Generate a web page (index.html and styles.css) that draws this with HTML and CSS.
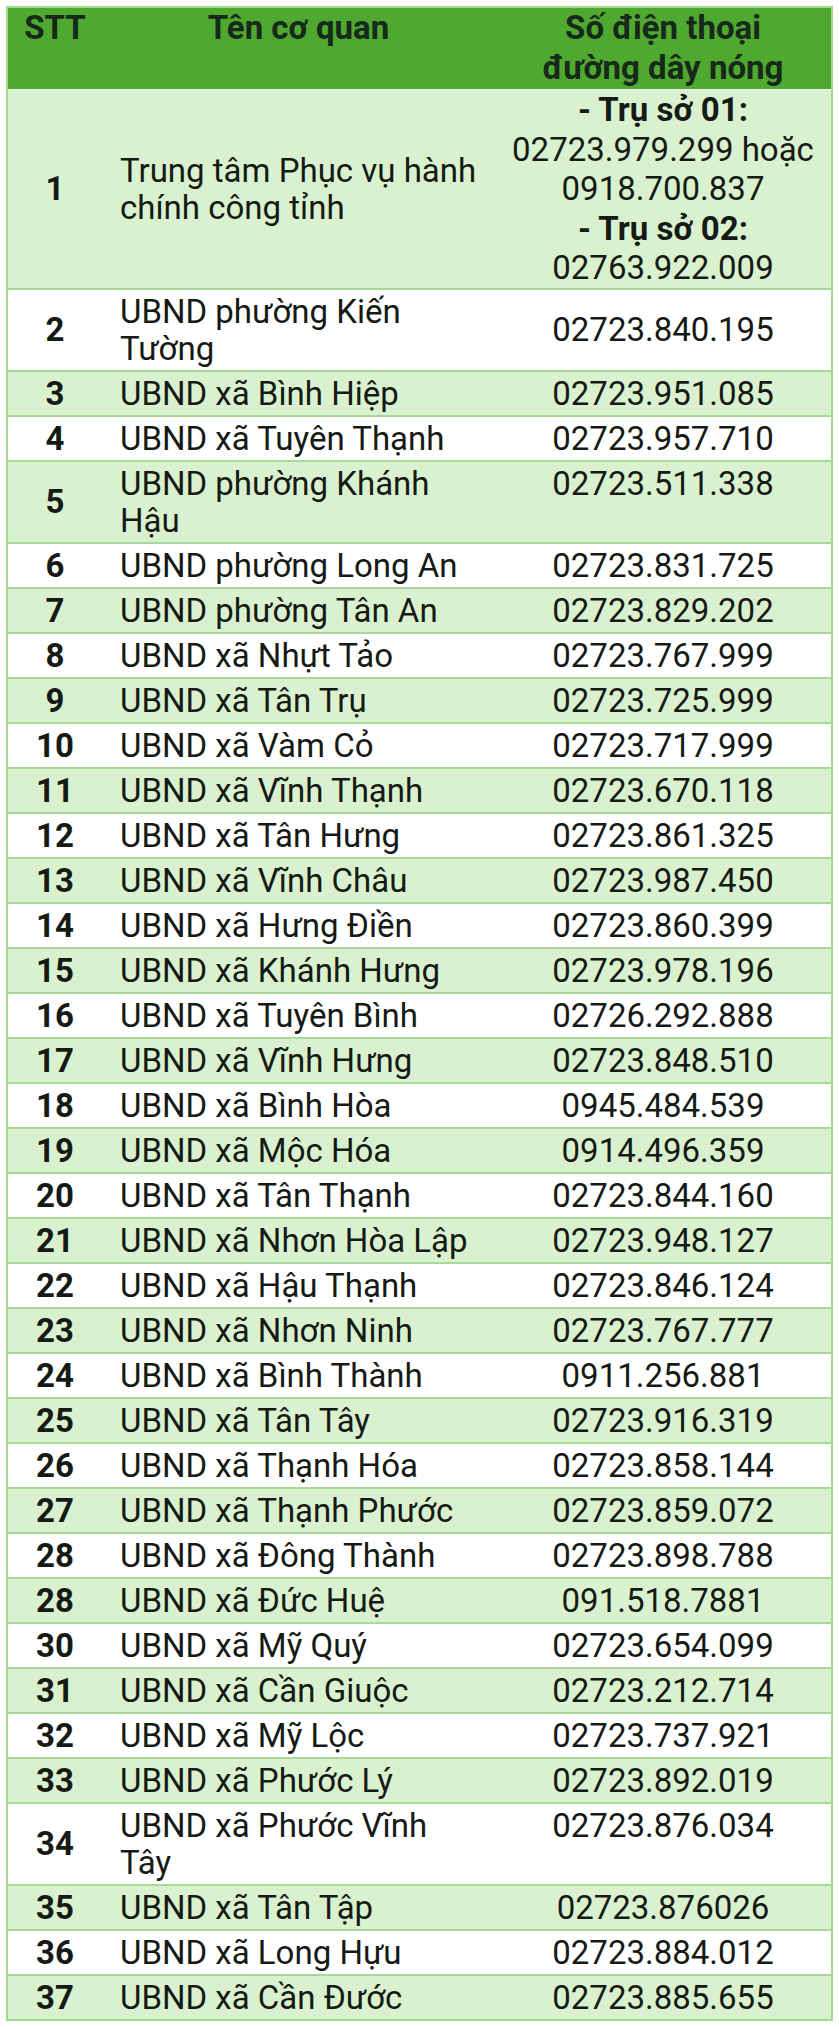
FILE: index.html
```html
<!DOCTYPE html>
<html lang="vi">
<head>
<meta charset="utf-8">
<title>Số điện thoại đường dây nóng</title>
<link rel="stylesheet" href="styles.css">
</head>
<body>
<table class="hotline">
  <colgroup>
    <col class="c-stt">
    <col class="c-name">
    <col class="c-phone">
  </colgroup>
  <thead>
    <tr>
      <th class="stt">STT</th>
      <th class="name">Tên cơ quan</th>
      <th class="phone">Số điện thoại<br>đường dây nóng</th>
    </tr>
  </thead>
  <tbody>
    <tr>
      <td class="stt">1</td>
      <td class="name">Trung tâm Phục vụ hành chính công tỉnh</td>
      <td class="phone multi">
        <div class="lbl">- Trụ sở 01:</div>
        <div>02723.979.299 hoặc</div>
        <div>0918.700.837</div>
        <div class="lbl">- Trụ sở 02:</div>
        <div>02763.922.009</div>
      </td>
    </tr>
    <tr><td class="stt">2</td><td class="name">UBND phường Kiến Tường</td><td class="phone">02723.840.195</td></tr>
    <tr><td class="stt">3</td><td class="name">UBND xã Bình Hiệp</td><td class="phone">02723.951.085</td></tr>
    <tr><td class="stt">4</td><td class="name">UBND xã Tuyên Thạnh</td><td class="phone">02723.957.710</td></tr>
    <tr><td class="stt">5</td><td class="name">UBND phường Khánh Hậu</td><td class="phone top">02723.511.338</td></tr>
    <tr><td class="stt">6</td><td class="name">UBND phường Long An</td><td class="phone">02723.831.725</td></tr>
    <tr><td class="stt">7</td><td class="name">UBND phường Tân An</td><td class="phone">02723.829.202</td></tr>
    <tr><td class="stt">8</td><td class="name">UBND xã Nhựt Tảo</td><td class="phone">02723.767.999</td></tr>
    <tr><td class="stt">9</td><td class="name">UBND xã Tân Trụ</td><td class="phone">02723.725.999</td></tr>
    <tr><td class="stt">10</td><td class="name">UBND xã Vàm Cỏ</td><td class="phone">02723.717.999</td></tr>
    <tr><td class="stt">11</td><td class="name">UBND xã Vĩnh Thạnh</td><td class="phone">02723.670.118</td></tr>
    <tr><td class="stt">12</td><td class="name">UBND xã Tân Hưng</td><td class="phone">02723.861.325</td></tr>
    <tr><td class="stt">13</td><td class="name">UBND xã Vĩnh Châu</td><td class="phone">02723.987.450</td></tr>
    <tr><td class="stt">14</td><td class="name">UBND xã Hưng Điền</td><td class="phone">02723.860.399</td></tr>
    <tr><td class="stt">15</td><td class="name">UBND xã Khánh Hưng</td><td class="phone">02723.978.196</td></tr>
    <tr><td class="stt">16</td><td class="name">UBND xã Tuyên Bình</td><td class="phone">02726.292.888</td></tr>
    <tr><td class="stt">17</td><td class="name">UBND xã Vĩnh Hưng</td><td class="phone">02723.848.510</td></tr>
    <tr><td class="stt">18</td><td class="name">UBND xã Bình Hòa</td><td class="phone">0945.484.539</td></tr>
    <tr><td class="stt">19</td><td class="name">UBND xã Mộc Hóa</td><td class="phone">0914.496.359</td></tr>
    <tr><td class="stt">20</td><td class="name">UBND xã Tân Thạnh</td><td class="phone">02723.844.160</td></tr>
    <tr><td class="stt">21</td><td class="name">UBND xã Nhơn Hòa Lập</td><td class="phone">02723.948.127</td></tr>
    <tr><td class="stt">22</td><td class="name">UBND xã Hậu Thạnh</td><td class="phone">02723.846.124</td></tr>
    <tr><td class="stt">23</td><td class="name">UBND xã Nhơn Ninh</td><td class="phone">02723.767.777</td></tr>
    <tr><td class="stt">24</td><td class="name">UBND xã Bình Thành</td><td class="phone">0911.256.881</td></tr>
    <tr><td class="stt">25</td><td class="name">UBND xã Tân Tây</td><td class="phone">02723.916.319</td></tr>
    <tr><td class="stt">26</td><td class="name">UBND xã Thạnh Hóa</td><td class="phone">02723.858.144</td></tr>
    <tr><td class="stt">27</td><td class="name">UBND xã Thạnh Phước</td><td class="phone">02723.859.072</td></tr>
    <tr><td class="stt">28</td><td class="name">UBND xã Đông Thành</td><td class="phone">02723.898.788</td></tr>
    <tr><td class="stt">28</td><td class="name">UBND xã Đức Huệ</td><td class="phone">091.518.7881</td></tr>
    <tr><td class="stt">30</td><td class="name">UBND xã Mỹ Quý</td><td class="phone">02723.654.099</td></tr>
    <tr><td class="stt">31</td><td class="name">UBND xã Cần Giuộc</td><td class="phone">02723.212.714</td></tr>
    <tr><td class="stt">32</td><td class="name">UBND xã Mỹ Lộc</td><td class="phone">02723.737.921</td></tr>
    <tr><td class="stt">33</td><td class="name">UBND xã Phước Lý</td><td class="phone">02723.892.019</td></tr>
    <tr><td class="stt">34</td><td class="name">UBND xã Phước Vĩnh Tây</td><td class="phone top">02723.876.034</td></tr>
    <tr><td class="stt">35</td><td class="name">UBND xã Tân Tập</td><td class="phone">02723.876026</td></tr>
    <tr><td class="stt">36</td><td class="name">UBND xã Long Hựu</td><td class="phone">02723.884.012</td></tr>
    <tr><td class="stt">37</td><td class="name">UBND xã Cần Đước</td><td class="phone">02723.885.655</td></tr>
  </tbody>
</table>
</body>
</html>
```
FILE: styles.css
```css
html, body {
  margin: 0;
  padding: 0;
  background: #ffffff;
}

body {
  padding: 6px;
  font-family: Roboto, "Liberation Sans", Arial, sans-serif;
  font-size: 33px;
  color: #151a15;
}

.hotline {
  width: 827px;
  table-layout: fixed;
  border-collapse: separate;
  border-spacing: 0;
  border: 2px solid #a3da92;
}

.c-stt { width: 94px; }
.c-name { width: 393px; }
.c-phone { width: 336px; }

.hotline th {
  background: #4fa82f;
  color: #17291a;
  font-weight: 700;
  line-height: 40px;
  padding: 0 0 1px;
  vertical-align: top;
  text-align: center;
  border-bottom: 1px solid #e9f3e4;
}

.hotline td {
  line-height: 37px;
  padding: 3px 0;
  border-bottom: 2px solid #a8d99b;
  vertical-align: middle;
}

.hotline tbody tr:last-child td {
  border-bottom: 0;
}

.hotline tbody tr:nth-child(odd) td {
  background: #d9f1cf;
}

.hotline tbody tr:nth-child(even) td {
  background: #ffffff;
}

td.stt {
  text-align: center;
  font-weight: 700;
}

td.name {
  text-align: left;
  padding-left: 18px;
  padding-right: 14px;
}

td.phone {
  text-align: center;
}

td.phone.top {
  vertical-align: top;
}

td.phone.multi {
  line-height: 39.5px;
  padding: 0;
}

.lbl {
  font-weight: 700;
}
```
